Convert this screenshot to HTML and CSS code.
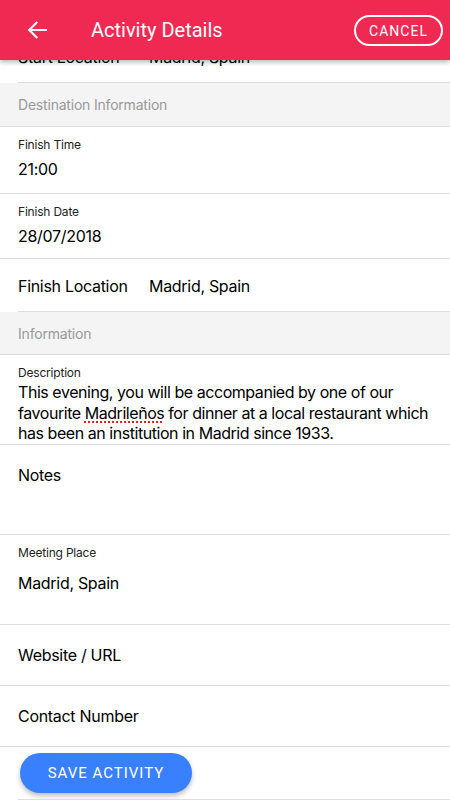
FILE: index.html
```html
<!DOCTYPE html>
<html lang="en">
<head>
  <meta charset="UTF-8" />
  <meta name="viewport" content="width=device-width, initial-scale=1.0">
  <title>Activity Details</title>
  <link rel="stylesheet" href="styles.css">
</head>
<body>
  <div class="toolbar">
    <button class="back-btn" aria-label="Back">
      <svg width="20" height="18" viewBox="0 0 20 18">
        <path d="M19 9H2.5M9.5 1.8L2.2 9l7.3 7.2" fill="none" stroke="#fff" stroke-width="2.2" stroke-linecap="square"/>
      </svg>
    </button>
    <div class="toolbar-title">Activity Details</div>
    <button class="cancel-btn">CANCEL</button>
  </div>

  <div class="content">
    <div class="item item-inline inset">
      <span class="inline-label">Start Location</span>
      <span>Madrid, Spain</span>
    </div>

    <div class="divider">Destination Information</div>

    <div class="item stacked first">
      <div class="label">Finish Time</div>
      <div class="value">21:00</div>
    </div>
    <div class="item stacked">
      <div class="label">Finish Date</div>
      <div class="value">28/07/2018</div>
    </div>
    <div class="item item-inline inset">
      <span class="inline-label">Finish Location</span>
      <span>Madrid, Spain</span>
    </div>

    <div class="divider short">Information</div>

    <div class="item desc">
      <div class="label">Description</div>
      <div class="desc-text">This evening, you will be accompanied by one of our favourite <span class="misspelt">Madrileños</span> for dinner at a local restaurant which has been an institution in Madrid since 1933.</div>
    </div>
    <div class="item notes">Notes</div>
    <div class="item stacked tall">
      <div class="label">Meeting Place</div>
      <div class="value">Madrid, Spain</div>
    </div>
    <div class="item single">Website / URL</div>
    <div class="item single">Contact Number</div>

    <div class="item actions inset">
      <button class="save-btn">SAVE ACTIVITY</button>
    </div>
  </div>
</body>
</html>
```

FILE: styles.css
```css
body {
  margin: 0;
  font-family: Inter, "Noto Sans", sans-serif;
  color: #000;
  background: #fff;
  overflow: hidden;
  letter-spacing: -0.3px;
}

.toolbar {
  position: absolute;
  top: 0;
  left: 0;
  right: 0;
  height: 60px;
  background-color: #ef2952;
  display: flex;
  align-items: center;
  box-shadow: 0 2px 5px rgba(0,0,0,0.3);
  z-index: 2;
  font-family: Roboto, sans-serif;
  letter-spacing: 0;
}

.back-btn {
  background: none;
  border: none;
  padding: 0;
  margin-left: 27px;
  width: 20px;
  height: 18px;
  display: flex;
}

.toolbar-title {
  color: #fff;
  font-size: 20px;
  margin-left: 44px;
  flex: 1;
}

.cancel-btn {
  font-family: Roboto, sans-serif;
  background: transparent;
  color: #fff;
  border: 2px solid #fff;
  border-radius: 16px;
  width: 89px;
  height: 31px;
  font-size: 14px;
  letter-spacing: 1px;
  margin-right: 7px;
  margin-top: 1px;
  padding: 0;
}

.content {
  padding-top: 30px;
}

.item {
  box-sizing: border-box;
  padding-left: 18px;
  border-bottom: 1px solid #dedede;
}

.item.inset {
  border-bottom: none;
  position: relative;
}

.item.inset::after {
  content: "";
  position: absolute;
  left: 18px;
  right: 0;
  bottom: 0;
  height: 1px;
  background: #dedede;
}

.item-inline {
  height: 53px;
  display: flex;
  align-items: center;
  font-size: 16px;
}

.inline-label {
  width: 131px;
}

.divider {
  height: 44px;
  background: #f4f4f4;
  border-bottom: 1px solid #dedede;
  box-sizing: border-box;
  padding-left: 18px;
  display: flex;
  align-items: center;
  color: #999;
  font-size: 14px;
  letter-spacing: -0.2px;
}

.divider.short {
  height: 43px;
}

.stacked {
  height: 65px;
  padding-top: 10px;
}

.stacked.first {
  height: 67px;
}

.stacked.tall {
  height: 90px;
}

.label {
  font-size: 12px;
  color: #222;
  line-height: 16px;
  letter-spacing: -0.2px;
}

.value {
  font-size: 16px;
  line-height: 20px;
  margin-top: 6px;
}

.stacked.tall .value {
  margin-top: 12px;
}

.desc {
  height: 90px;
  padding-top: 10px;
  padding-right: 4px;
}

.desc-text {
  font-size: 16px;
  line-height: 20.5px;
  margin-top: 1px;
  letter-spacing: -0.45px;
}

.misspelt {
  text-decoration: underline dotted #e02020;
  text-decoration-thickness: 2px;
  text-underline-offset: 3px;
}

.notes {
  height: 90px;
  padding-top: 20px;
  font-size: 16px;
  line-height: 20px;
}

.single {
  height: 61px;
  display: flex;
  align-items: center;
  font-size: 16px;
}

.actions {
  height: 53px;
  padding-left: 20px;
  padding-top: 6px;
}

.save-btn {
  font-family: Roboto, sans-serif;
  background-color: #3880ff;
  color: #fff;
  border: none;
  border-radius: 20px;
  width: 172px;
  height: 40px;
  font-size: 15px;
  letter-spacing: 1px;
  box-shadow: 0 3px 5px rgba(0,0,0,0.25);
  padding: 0;
}
```
